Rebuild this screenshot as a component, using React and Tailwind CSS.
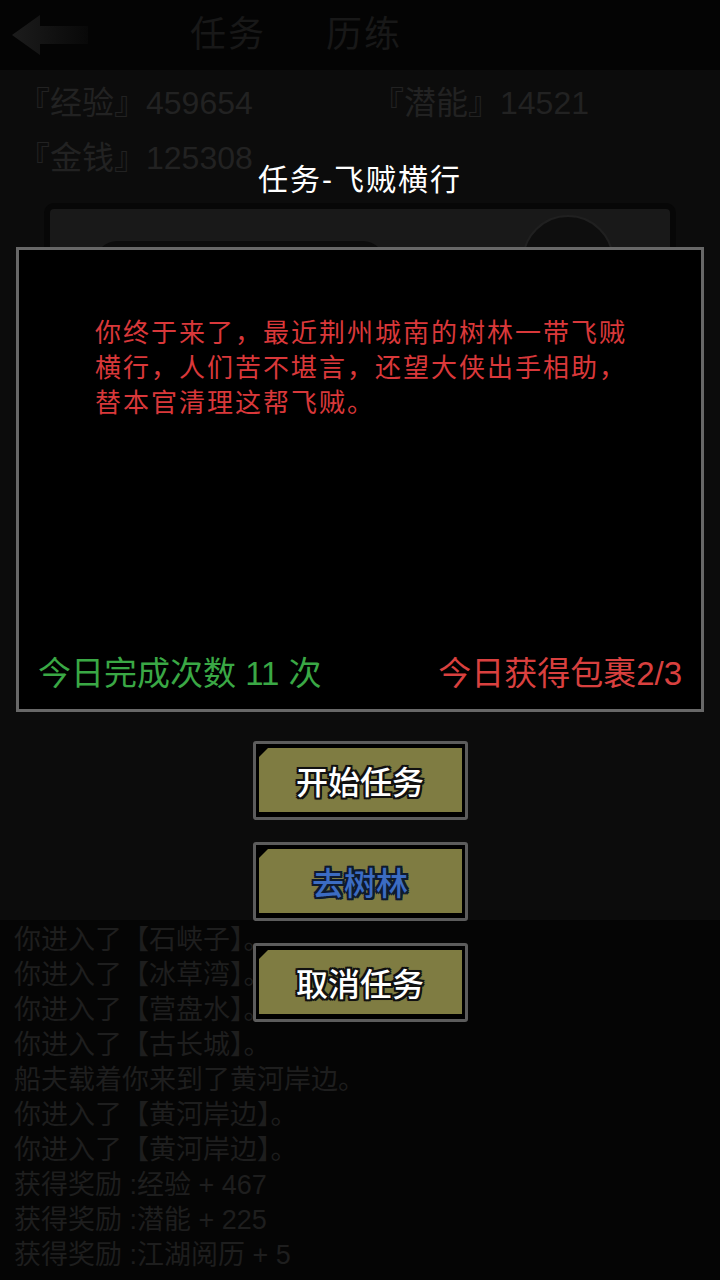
import React from 'react';

const logLines = [
  '你进入了【石峡子】。',
  '你进入了【冰草湾】。',
  '你进入了【营盘水】。',
  '你进入了【古长城】。',
  '船夫载着你来到了黄河岸边。',
  '你进入了【黄河岸边】。',
  '你进入了【黄河岸边】。',
  '获得奖励 :经验 + 467',
  '获得奖励 :潜能 + 225',
  '获得奖励 :江湖阅历 + 5',
];

const outline =
  '[text-shadow:2px_0_0_#111,-2px_0_0_#111,0_2px_0_#111,0_-2px_0_#111,2px_2px_0_#111,-2px_-2px_0_#111,2px_-2px_0_#111,-2px_2px_0_#111,0_0_3px_#000]';

const GameButton = ({ label, textClass }) => (
  <div className="w-[215px] h-[79px] rounded-[3px] border-[3px] border-[#5c5c5c] bg-black pt-[4px] pb-[5px] px-[3px]">
    <div className="relative h-full bg-[#7f7c42] flex items-center justify-center">
      {/* corner notch */}
      <div className="absolute top-0 left-0 w-0 h-0 border-t-[9px] border-t-black border-r-[9px] border-r-transparent" />
      <span className={`pt-[5px] text-[32px] font-medium leading-none ${textClass}`}>{label}</span>
    </div>
  </div>
);

export default function App() {
  return (
    <div className="relative w-[720px] h-[1280px] overflow-hidden bg-[#0c0c0c] font-['Liberation_Sans','Noto_Sans_CJK_SC',sans-serif]">
      {/* dimmed game screen behind the dialog */}
      <div className="flex flex-col h-full">
        <div className="h-[70px] bg-[#040404] flex items-center">
          <svg width="80" height="44" viewBox="0 0 80 44" className="ml-[10px]">
            <defs>
              <linearGradient id="arr" x1="0" x2="1" y1="0" y2="0">
                <stop offset="0" stopColor="#1c1c1c" />
                <stop offset="1" stopColor="#080808" />
              </linearGradient>
            </defs>
            <path d="M2 22 L30 2 L30 13 L78 13 L78 31 L30 31 L30 42 Z" fill="url(#arr)" />
          </svg>
          <span className="ml-[100px] text-[36px] text-[#181818] tracking-[2px]">任务</span>
          <span className="ml-[60px] text-[36px] text-[#181818] tracking-[2px]">历练</span>
        </div>

        <div className="h-[133px] pt-[6px] pl-[18px] text-[32px] leading-[55px] text-[#222222]">
          <div className="flex">
            <span className="w-[354px]">『经验』459654</span>
            <span>『潜能』14521</span>
          </div>
          <div>『金钱』125308</div>
        </div>

        <div className="h-[717px] px-[44px]">
          <div className="h-[300px] rounded-[10px] border-[6px] border-[#070707] bg-[#191919] flex justify-between pl-[45px] pr-[56px]">
            <div className="mt-[32px] w-[290px] h-[44px] rounded-full bg-[#0c0c0c]" />
            <div className="mt-[6px] w-[92px] h-[92px] rounded-full bg-[#0e0e0e] border-2 border-[#202020]" />
          </div>
        </div>

        <div className="flex-1 bg-[#050505] pt-[3px] pl-[14px] text-[27px] leading-[35px] text-[#1e1e1e]">
          {logLines.map((line, i) => (
            <div key={i}>{line}</div>
          ))}
        </div>
      </div>

      {/* task dialog */}
      <div className="absolute inset-0 flex flex-col items-center">
        <div className="mt-[161px] h-[38px] leading-[38px] text-[30px] tracking-[2px] text-white">任务-飞贼横行</div>

        <div className="mt-[48px] w-[688px] h-[465px] border-[3px] border-[#686868] bg-black flex flex-col">
          <div className="pt-[66px] pl-[76px] text-[26px] leading-[35px] tracking-[2px] text-[#d9383a]">
            <div>你终于来了，最近荆州城南的树林一带飞贼</div>
            <div>横行，人们苦不堪言，还望大侠出手相助，</div>
            <div>替本官清理这帮飞贼。</div>
          </div>
          <div className="mt-auto flex justify-between items-center px-[19px] pb-[15px] text-[33px] leading-[40px]">
            <span className="text-[#3aa845]">今日完成次数 11 次</span>
            <span className="text-[#d9403f]">今日获得包裹2/3</span>
          </div>
        </div>

        <div className="mt-[29px] flex flex-col gap-[22px]">
          <GameButton label="开始任务" textClass={`text-white ${outline}`} />
          <GameButton
            label="去树林"
            textClass="text-[#3c6cc2] [text-shadow:2px_0_0_#0e1a2e,-2px_0_0_#0e1a2e,0_2px_0_#0e1a2e,0_-2px_0_#0e1a2e,2px_2px_0_#0e1a2e,-2px_-2px_0_#0e1a2e,2px_-2px_0_#0e1a2e,-2px_2px_0_#0e1a2e]"
          />
          <GameButton label="取消任务" textClass={`text-white ${outline}`} />
        </div>
      </div>
    </div>
  );
}
